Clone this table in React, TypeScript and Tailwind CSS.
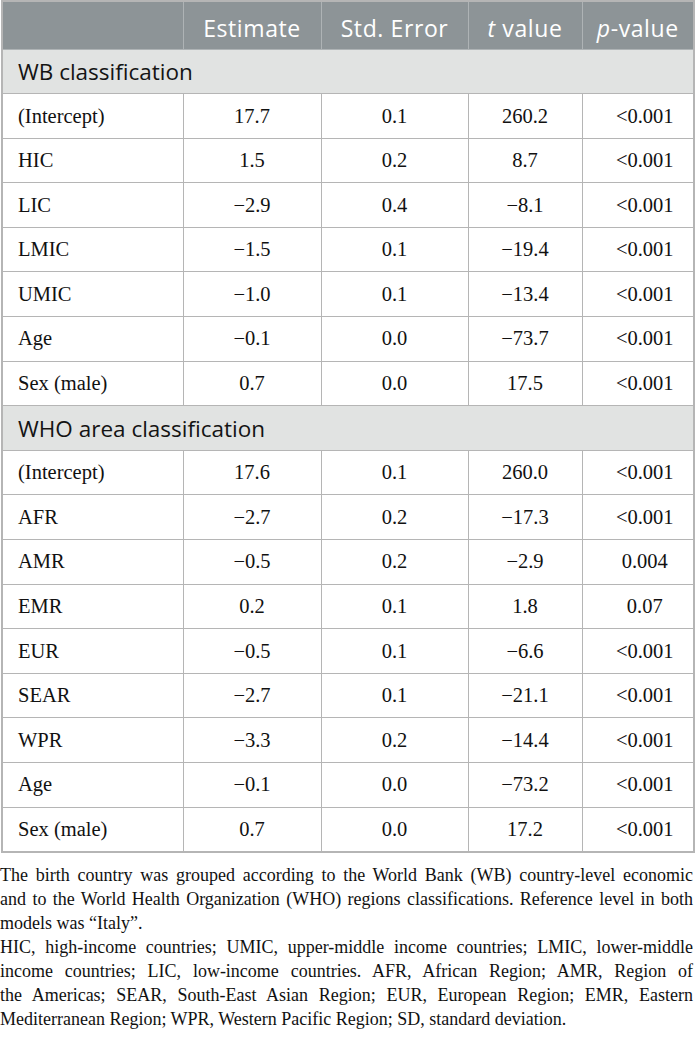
import React from "react";

type Row = { label: string; est: string; se: string; t: string; p: string };

const wbRows: Row[] = [
  { label: "(Intercept)", est: "17.7", se: "0.1", t: "260.2", p: "<0.001" },
  { label: "HIC", est: "1.5", se: "0.2", t: "8.7", p: "<0.001" },
  { label: "LIC", est: "−2.9", se: "0.4", t: "−8.1", p: "<0.001" },
  { label: "LMIC", est: "−1.5", se: "0.1", t: "−19.4", p: "<0.001" },
  { label: "UMIC", est: "−1.0", se: "0.1", t: "−13.4", p: "<0.001" },
  { label: "Age", est: "−0.1", se: "0.0", t: "−73.7", p: "<0.001" },
  { label: "Sex (male)", est: "0.7", se: "0.0", t: "17.5", p: "<0.001" },
];

const whoRows: Row[] = [
  { label: "(Intercept)", est: "17.6", se: "0.1", t: "260.0", p: "<0.001" },
  { label: "AFR", est: "−2.7", se: "0.2", t: "−17.3", p: "<0.001" },
  { label: "AMR", est: "−0.5", se: "0.2", t: "−2.9", p: "0.004" },
  { label: "EMR", est: "0.2", se: "0.1", t: "1.8", p: "0.07" },
  { label: "EUR", est: "−0.5", se: "0.1", t: "−6.6", p: "<0.001" },
  { label: "SEAR", est: "−2.7", se: "0.1", t: "−21.1", p: "<0.001" },
  { label: "WPR", est: "−3.3", se: "0.2", t: "−14.4", p: "<0.001" },
  { label: "Age", est: "−0.1", se: "0.0", t: "−73.2", p: "<0.001" },
  { label: "Sex (male)", est: "0.7", se: "0.0", t: "17.2", p: "<0.001" },
];

// footnote lines, the last of each paragraph is not justified
const note1 = [
  "The birth country was grouped according to the World Bank (WB) country-level economic",
  "and to the World Health Organization (WHO) regions classifications. Reference level in both",
  "models was “Italy”.",
];
const note2 = [
  "HIC, high-income countries; UMIC, upper-middle income countries; LMIC, lower-middle",
  "income countries; LIC, low-income countries. AFR, African Region; AMR, Region of",
  "the Americas; SEAR, South-East Asian Region; EUR, European Region; EMR, Eastern",
  "Mediterranean Region; WPR, Western Pacific Region; SD, standard deviation.",
];

const sans = "font-['Open_Sans',sans-serif]";
const cell = "border border-[#b5b5b5] h-[44.6px] p-0 text-center align-middle";
const head = "border border-[#aeb3b5] p-0 pt-[6px] font-normal tracking-[0.6px]";

function DataRow({ row }: { row: Row }) {
  return (
    <tr>
      <td className={`${cell} text-left pl-[15px]`}>{row.label}</td>
      <td className={cell}>{row.est}</td>
      <td className={cell}>{row.se}</td>
      <td className={cell}>{row.t}</td>
      <td className={`${cell} pl-[14px]`}>{row.p}</td>
    </tr>
  );
}

function SectionRow({ title }: { title: string }) {
  return (
    <tr>
      <td colSpan={5} className={`border border-[#b5b5b5] bg-[#e1e3e2] h-[44.6px] p-0 pl-[15px] pt-[2px] text-left text-[22.5px] text-[#141414] ${sans}`}>
        {title}
      </td>
    </tr>
  );
}

function Lines({ lines }: { lines: string[] }) {
  return (
    <div>
      {lines.map((l, i) => (
        <div key={i} className={i < lines.length - 1 ? "text-justify [text-align-last:justify]" : ""}>
          {l}
        </div>
      ))}
    </div>
  );
}

export default function App() {
  return (
    <div className="w-[695px] bg-white text-[#111] font-['Liberation_Serif',serif] text-[20.5px]">
      <table className="ml-[1px] w-[692px] border-collapse border-2 border-[#b5b5b5] table-fixed">
        <colgroup>
          <col className="w-[181px]" />
          <col className="w-[138px]" />
          <col className="w-[147px]" />
          <col className="w-[114px]" />
          <col className="w-[112px]" />
        </colgroup>
        <thead>
          <tr className={`bg-[#8d9497] text-white text-[23px] ${sans}`}>
            <th className="border border-[#aeb3b5] h-[48px] p-0 font-normal"></th>
            <th className={head}>Estimate</th>
            <th className={head}>Std. Error</th>
            <th className={head}>
              <i>t</i> value
            </th>
            <th className={head}>
              <i>p</i>-value
            </th>
          </tr>
        </thead>
        <tbody>
          <SectionRow title="WB classification" />
          {wbRows.map((r) => (
            <DataRow key={"wb" + r.label} row={r} />
          ))}
          <SectionRow title="WHO area classification" />
          {whoRows.map((r) => (
            <DataRow key={"who" + r.label} row={r} />
          ))}
        </tbody>
      </table>
      <div className="mt-[10px] w-[693px] text-[18px] leading-[24px]">
        <Lines lines={note1} />
        <Lines lines={note2} />
      </div>
    </div>
  );
}
